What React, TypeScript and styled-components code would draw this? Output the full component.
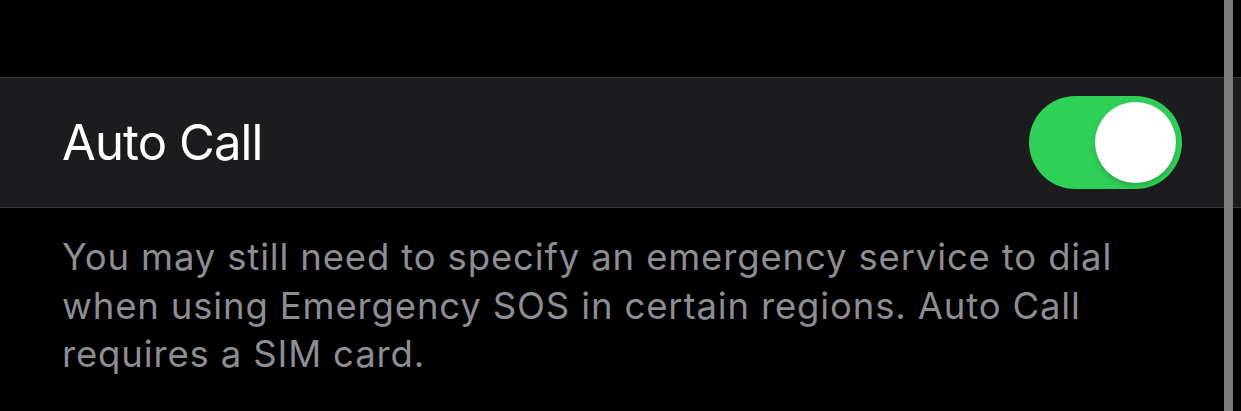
import React from "react";
import styled, { createGlobalStyle } from "styled-components";

const Global = createGlobalStyle`
  html, body { margin: 0; padding: 0; background: #000; }
  body { font-family: Inter, "Noto Sans", sans-serif; -webkit-font-smoothing: antialiased; }
`;

const Page = styled.div`
  position: relative;
  width: 1241px;
  height: 411px;
  background: #000;
  overflow: hidden;
  padding-top: 77px;
  box-sizing: border-box;
`;

const Row = styled.div`
  height: 131px;
  box-sizing: border-box;
  background: #1c1c1e;
  border-top: 1px solid #38383a;
  border-bottom: 1px solid #38383a;
  display: flex;
  align-items: center;
  justify-content: space-between;
  padding: 0 59px 0 62px;
`;

const Label = styled.span`
  color: #fff;
  font-size: 49px;
  letter-spacing: -0.9px;
  line-height: 1;
`;

const Track = styled.div<{ $on: boolean }>`
  width: 153px;
  height: 93px;
  border-radius: 47px;
  background: ${(p) => (p.$on ? "#30d158" : "#39393d")};
  display: flex;
  align-items: center;
  justify-content: ${(p) => (p.$on ? "flex-end" : "flex-start")};
  padding: 0 6px;
  box-sizing: border-box;
`;

const Knob = styled.div`
  width: 81px;
  height: 81px;
  border-radius: 50%;
  background: #fff;
  box-shadow: 0 3px 8px rgba(0, 0, 0, 0.15), 0 3px 1px rgba(0, 0, 0, 0.06);
`;

const Footer = styled.p`
  margin: 0;
  padding: 25px 70px 0 62px;
  color: #8d8d93;
  font-size: 36.5px;
  line-height: 48.5px;
  letter-spacing: 0.85px;
`;

const ScrollBar = styled.div`
  position: absolute;
  top: 0;
  bottom: 0;
  left: 1224px;
  width: 9px;
  background: rgba(128, 128, 128, 0.96);
`;

export default function App() {
  return (
    <>
      <Global />
      <Page>
        <Row>
          <Label>Auto Call</Label>
          <Track $on>
            <Knob />
          </Track>
        </Row>
        <Footer>
          You may still need to specify an emergency service to dial when using Emergency SOS in certain regions. Auto Call requires a SIM card.
        </Footer>
        <ScrollBar />
      </Page>
    </>
  );
}
